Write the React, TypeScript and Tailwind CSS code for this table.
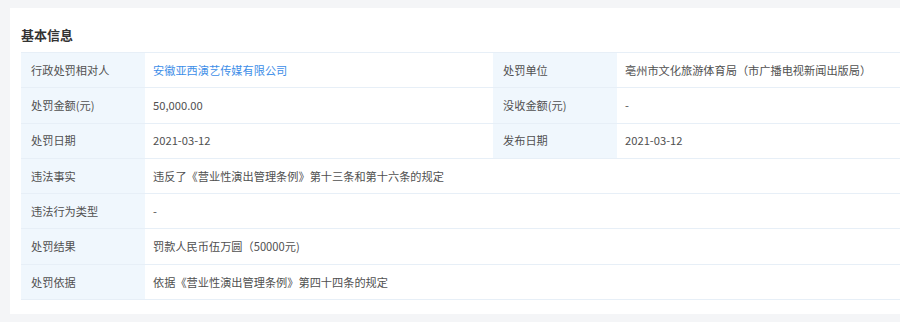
const rows: { label: string; value: string; link?: boolean; label2?: string; value2?: string }[] = [
  { label: "行政处罚相对人", value: "安徽亚西演艺传媒有限公司", link: true, label2: "处罚单位", value2: "亳州市文化旅游体育局（市广播电视新闻出版局）" },
  { label: "处罚金额(元)", value: "50,000.00", label2: "没收金额(元)", value2: "-" },
  { label: "处罚日期", value: "2021-03-12", label2: "发布日期", value2: "2021-03-12" },
  { label: "违法事实", value: "违反了《营业性演出管理条例》第十三条和第十六条的规定" },
  { label: "违法行为类型", value: "-" },
  { label: "处罚结果", value: "罚款人民币伍万圆（50000元)" },
  { label: "处罚依据", value: "依据《营业性演出管理条例》第四十四条的规定" },
];

export default function App() {
  return (
    <div
      className="w-[900px] h-[322px] bg-[#f4f5f7] pt-2 pl-[10px] overflow-hidden"
      style={{ fontFamily: '"Noto Sans CJK SC", "Noto Sans", sans-serif' }}
    >
      <div className="bg-white h-[306px] pl-[11px] pt-[17px]">
        <h2 className="text-[13px] leading-[20px] font-bold text-[#333] mb-[7px]">基本信息</h2>
        <div className="border-t border-[#e7eff7] text-[11.2px] text-[#505050]">
          {rows.map((r) => (
            <div key={r.label} className="flex h-[35.3px] border-b border-[#e7eff7]">
              <div className="w-[124px] shrink-0 bg-[#f0f7fd] pl-[10px] flex items-center">{r.label}</div>
              {r.label2 ? (
                <>
                  <div className={`w-[348px] shrink-0 pl-2 flex items-center ${r.link ? "text-[#3d8ee8]" : ""}`}>{r.value}</div>
                  <div className="w-[124px] shrink-0 bg-[#f0f7fd] pl-[10px] flex items-center">{r.label2}</div>
                  <div className="flex-1 pl-2 flex items-center">{r.value2}</div>
                </>
              ) : (
                <div className="flex-1 pl-2 flex items-center">{r.value}</div>
              )}
            </div>
          ))}
        </div>
      </div>
    </div>
  );
}
